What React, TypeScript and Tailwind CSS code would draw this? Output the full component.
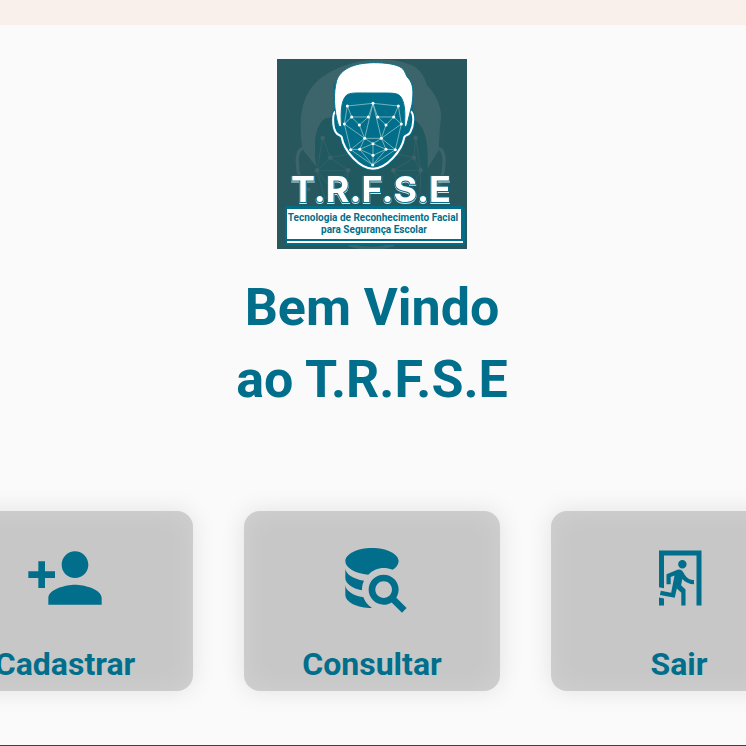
import type { ReactNode } from "react";

const MESH_POINTS: [number, number][] = [
  [309, 154], [232, 162], [385, 162], [245, 195], [295, 195], [323, 195], [371, 195],
  [223, 216], [268, 219], [348, 219], [394, 216], [284, 259], [334, 259], [309, 275],
  [242, 293], [269, 292], [348, 292], [376, 293], [309, 310], [308, 339],
];

const MESH_LINES =
  "M232 162L309 154L385 162M232 162L245 195M232 162L223 216M385 162L371 195M385 162L394 216M245 195H295M323 195H371M245 195L223 216M245 195L268 219L295 195L309 154L323 195L348 219L371 195L394 216M309 154L284 259M309 154L334 259M268 219L284 259M348 219L334 259M223 216L284 259M394 216L334 259M223 216L242 293L308 339L376 293L394 216M242 293L284 259L309 275L334 259L376 293M284 259H334M284 259L269 292L309 275L348 292L334 259M242 293L269 292L309 310L348 292L376 293M309 275V339M269 292L308 339L348 292";

function Logo() {
  return (
    <svg
      viewBox="0 0 190 190"
      className="size-[190px]"
      role="img"
      aria-label="T.R.F.S.E"
    >
      <defs>
        <clipPath id="logo-clip">
          <rect width="190" height="190" />
        </clipPath>
      </defs>
      <rect width="190" height="190" fill="#28575d" />
      <g clipPath="url(#logo-clip)">
        <g transform="translate(-7 -7) scale(0.33333)">
          {/* faded head behind the main one */}
          <path
            d="M97 292C82 180 100 112 165 70C225 27 330 10 405 32C440 42 460 60 470 98C505 135 520 175 510 220L506 295L472 350C475 280 470 225 430 202C370 185 240 185 165 200C130 225 132 290 140 345Z"
            fill="#3c656b"
          />
          <path
            d="M140 345C132 290 130 225 165 200C240 185 370 185 430 202C470 225 475 280 472 350L465 466H150Z"
            fill="#20595f"
          />
          <path
            d="M97 290C78 295 77 345 92 385C100 408 112 412 120 414M507 290C526 295 527 345 512 385C506 405 498 412 488 414M235 578Q305 600 372 578"
            fill="none"
            stroke="#3c656b"
            strokeWidth="10"
          />
          <g stroke="#3c656b" fill="#3c656b" strokeWidth="2">
            <path
              d="M158 258L181 317L141 355H235L181 317L265 300M158 258L141 355L165 440L235 355L220 460M437 258L432 317L452 355H370L432 317L350 300M437 258L452 355L450 440L370 355L400 460M141 355L220 460M452 355L400 460"
              fill="none"
            />
            <circle cx="158" cy="258" r="6" />
            <circle cx="181" cy="317" r="6" />
            <circle cx="141" cy="355" r="6" />
            <circle cx="235" cy="355" r="6" />
            <circle cx="437" cy="258" r="6" />
            <circle cx="432" cy="317" r="6" />
            <circle cx="452" cy="355" r="6" />
            <circle cx="370" cy="355" r="6" />
          </g>

          {/* head */}
          <path
            d="M197 178C187 182 187 222 197 240C203 251 211 248 215 255C222 298 270 350 309 350C348 350 396 298 403 255C407 248 416 251 421 240C432 220 433 185 422 178V100H197Z"
            fill="#016f8b"
            stroke="#036c87"
            strokeWidth="13"
          />
          <path
            d="M197 178C187 182 187 222 197 240C203 251 211 248 215 255C222 298 270 350 309 350C348 350 396 298 403 255C407 248 416 251 421 240C432 220 433 185 422 178"
            fill="none"
            stroke="#fff"
            strokeWidth="6"
          />
          <path
            d="M206 222C191 175 190 120 200 86C211 52 250 33 310 32C350 32 379 37 394 47C408 57 406 72 416 80C430 96 431 120 426 157L410 222L403 225C407 178 404 144 388 130C379 122 359 123 309 123C259 123 240 121 229 130C214 146 211 177 215 225Z"
            fill="#fff"
            stroke="#067591"
            strokeWidth="3"
          />
          <path d={MESH_LINES} fill="none" stroke="#a9d3cf" strokeWidth="2" />
          {MESH_POINTS.map(([x, y]) => (
            <circle key={`${x}-${y}`} cx={x} cy={y} r="4.5" fill="#fff" />
          ))}
        </g>

        {/* wordmark */}
        <text
          x="94"
          y="143"
          fontFamily="Inter, 'Liberation Sans', sans-serif"
          fontWeight="700"
          fontSize="36"
          textAnchor="middle"
          fill="#fff"
          stroke="#036c87"
          strokeWidth="2"
          paintOrder="stroke"
          className="drop-shadow-[0_1px_0_#d5e6e8]"
        >
          T.R.F.S.E
        </text>

        {/* caption plate */}
        <rect x="8" y="147" width="178" height="34" fill="#036c87" />
        <rect x="184" y="150" width="4" height="35" fill="#036c87" />
        <rect x="9" y="181" width="178" height="5" fill="#036c87" />
        <rect x="10" y="150" width="174" height="30" fill="#fff" />
        <rect x="10" y="182" width="176" height="2" fill="#fff" />
        <g
          fontFamily="Roboto, 'Liberation Sans', sans-serif"
          fontWeight="700"
          fontSize="10"
          textAnchor="middle"
          fill="#016f8b"
        >
          <text x="96" y="162">Tecnologia de Reconhecimento Facial</text>
          <text x="97" y="174">para Segurança Escolar</text>
        </g>
      </g>
    </svg>
  );
}

function PersonAddIcon() {
  return (
    <svg viewBox="0 0 24 24" className="size-20" fill="currentColor" aria-hidden="true">
      <path d="M15 12c2.21 0 4-1.79 4-4s-1.79-4-4-4-4 1.79-4 4 1.79 4 4 4zm-9-2V7H4v3H1v2h3v3h2v-3h3v-2H6zm9 4c-2.67 0-8 1.34-8 4v2h16v-2c0-2.66-5.33-4-8-4z" />
    </svg>
  );
}

function DatabaseSearchIcon() {
  return (
    <svg viewBox="0 0 24 24" className="size-20" fill="currentColor" aria-hidden="true">
      <path d="M18.68,12.32C16.92,10.56 14.07,10.57 12.32,12.33C10.56,14.09 10.56,16.94 12.32,18.69C13.81,20.17 16.11,20.43 17.89,19.32L21,22.39L22.39,21L19.3,17.89C20.43,16.12 20.17,13.8 18.68,12.32M17.27,17.27C16.29,18.25 14.71,18.24 13.73,17.27C12.76,16.29 12.76,14.71 13.74,13.73C14.71,12.76 16.29,12.76 17.27,13.73C18.24,14.71 18.24,16.29 17.27,17.27M10.9,20.1C10.25,19.44 9.74,18.65 9.42,17.78C6.27,17.25 4,15.76 4,14V17C4,19.21 7.58,21 12,21V21C11.6,20.74 11.23,20.44 10.9,20.1M4,9V12C4,13.68 6.07,15.12 9,15.7C9,15.63 9,15.57 9,15.5C9,14.57 9.2,13.65 9.58,12.81C6.34,12.3 4,10.79 4,9M12,3C7.58,3 4,4.79 4,7C4,9 7,10.68 10.85,11H10.9C12.1,9.74 13.76,9 15.5,9C16.41,9 17.31,9.19 18.14,9.56C19.17,9.09 19.87,8.12 20,7C20,4.79 16.42,3 12,3Z" />
    </svg>
  );
}

function ExitRunIcon() {
  return (
    <svg viewBox="0 0 24 24" className="size-[60px]" fill="currentColor" aria-hidden="true">
      <path d="M13.34,8.17C12.41,8.17 11.65,7.4 11.65,6.47A1.69,1.69 0 0,1 13.34,4.78C14.28,4.78 15.04,5.54 15.04,6.47C15.04,7.4 14.28,8.17 13.34,8.17M10.3,19.93L4.37,18.75L4.71,17.05L8.86,17.9L10.21,11.04L8.69,11.64V14.5H7V10.54L11.4,8.67L12.07,8.59C12.67,8.59 13.17,8.93 13.5,9.44L14.36,10.79C15.04,12 16.39,12.82 18,12.82V14.5C16.14,14.5 14.44,13.67 13.34,12.4L12.84,14.94L14.61,16.63V23H12.92V17.9L11.14,16.21L10.3,19.93M21,23H19V3H6V16.11L4,15.69V1H21V23M6,23H4V19.78L6,20.2V23Z" />
    </svg>
  );
}

function MenuCard({ label, icon }: { label: string; icon: ReactNode }) {
  return (
    <button
      type="button"
      className="flex h-[180px] w-64 shrink-0 cursor-pointer flex-col items-center justify-between rounded-2xl bg-[#c7c7c7] pt-[27px] pb-1 shadow-[0_0_24px_rgba(0,0,0,0.1),inset_0_0_28px_rgba(255,255,255,0.2)]"
    >
      <span className="flex h-20 items-center">{icon}</span>
      <span className="text-[32px] leading-[46px] font-bold">{label}</span>
    </button>
  );
}

export default function App() {
  return (
    <div className="flex min-h-screen flex-col overflow-hidden bg-[#fafafa] font-['Roboto','Liberation_Sans',sans-serif] text-[#016f8b]">
      <header className="h-[25px] bg-[#f9efeb]" />
      <main className="flex grow flex-col items-center pt-[34px] pr-0.5">
        <Logo />
        <h1 className="mt-[23px] text-center text-[52px] leading-[72px] font-bold">
          Bem Vindo
          <br />
          ao T.R.F.S.E
        </h1>
        <nav className="mt-[95px] flex justify-center gap-[51px]">
          <MenuCard label="Cadastrar" icon={<PersonAddIcon />} />
          <MenuCard label="Consultar" icon={<DatabaseSearchIcon />} />
          <MenuCard label="Sair" icon={<ExitRunIcon />} />
        </nav>
      </main>
      <footer className="h-px bg-[#404040]" />
    </div>
  );
}
